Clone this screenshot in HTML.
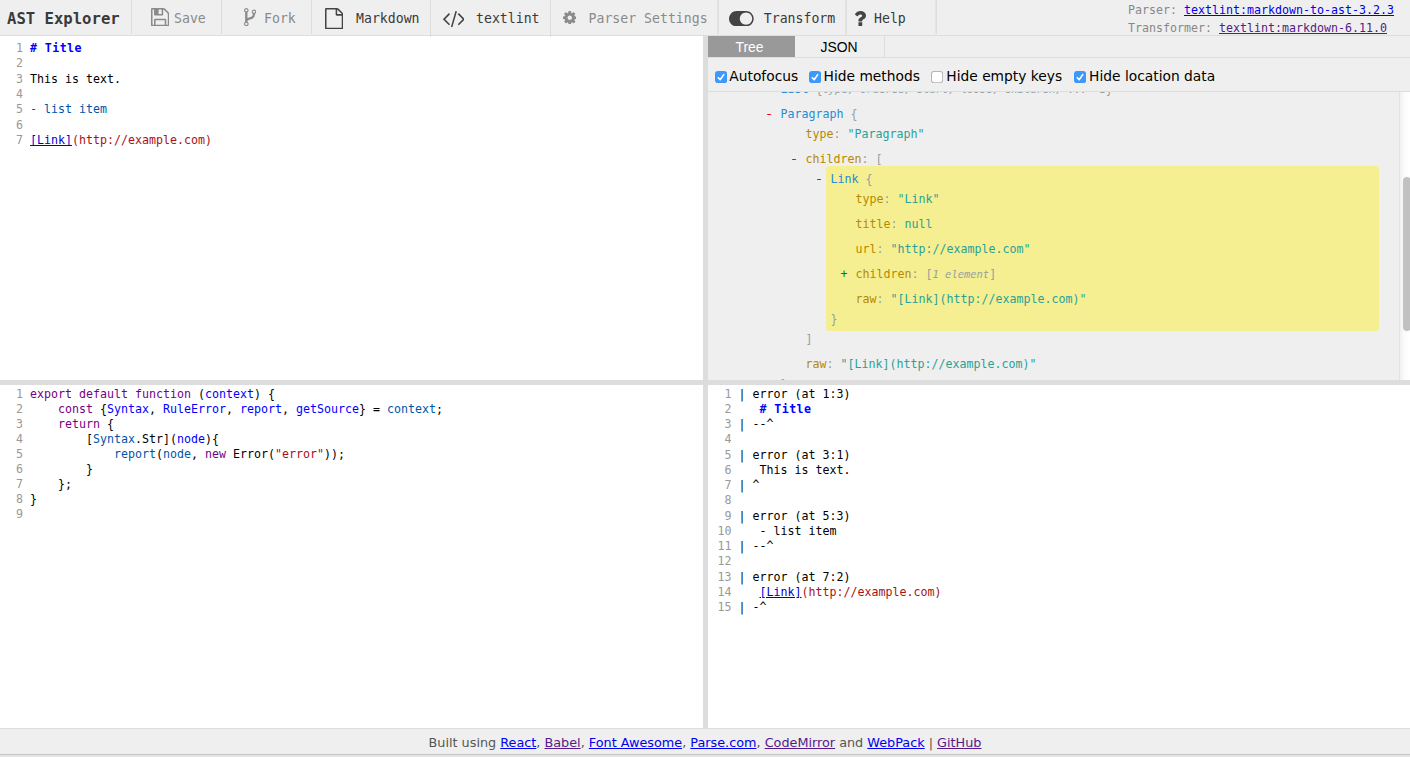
<!DOCTYPE html>
<html><head><meta charset="utf-8"><title>AST Explorer</title>
<style>
*{box-sizing:border-box}
html,body{margin:0;padding:0;width:1410px;height:757px;overflow:hidden;background:#fff}
body{position:relative;font-family:"DejaVu Sans Mono","Liberation Mono",monospace;font-size:11.63px;color:#000}
a{text-decoration:underline}
.abs{position:absolute}
#toolbar{left:0;top:0;width:1410px;height:36px;background:#efefef;border-bottom:1px solid #ddd}
.sep{position:absolute;top:0;width:1px;height:34px;background:#ddd;z-index:5}
.tb{position:absolute;top:0;height:35px;line-height:37px;font-size:13.2px;color:#3a3a3a;white-space:pre}
.tb.dis{color:#8a8a8a}
#title{left:7px;top:0;height:35px;line-height:38.4px;font-size:15.6px;font-weight:bold;color:#3a3a3a;white-space:pre}
.pinfo{position:absolute;left:1128px;height:18px;line-height:18px;white-space:pre;color:#888}
.pinfo a{color:#0000ee}.pinfo a.v{color:#551a8b}
.cm{position:absolute;background:#fff;overflow:hidden}
.ln{position:absolute;white-space:pre}
.num{position:absolute;color:#999;text-align:right;white-space:pre;width:30px}
.kw{color:#708}.def{color:#00f}.v2{color:#05a}.str{color:#a11}
.hd{color:#00f;font-weight:bold;letter-spacing:0.42px}.lk{color:#00c;text-decoration:underline}
#vsplit{left:703px;top:36px;width:5px;height:692px;background:#ddd}
#hsplit{left:0;top:380px;width:1410px;height:5px;background:#ddd}
#footer{left:0;top:728px;width:1410px;height:29px;background:#efefef;border-top:1px solid #ddd;text-align:center;font-family:"DejaVu Sans","Liberation Sans",sans-serif;font-size:12.8px;color:#555;line-height:27px;white-space:pre}
#footer a{color:#0000ee}#footer a.v{color:#551a8b}
#tree{left:708px;top:36px;width:702px;height:344px;background:#efefef;overflow:hidden}
.tab{position:absolute;top:0;height:21px;line-height:23px;text-align:center;font-family:"Liberation Sans",sans-serif;font-size:13.9px;color:#000}
.tab.on{background:#999;color:#fff}
.lbl{position:absolute;top:30px;height:20px;line-height:20px;font-family:"DejaVu Sans","Liberation Sans",sans-serif;font-size:13.8px;color:#000;white-space:pre}
.tl{position:absolute;height:20px;line-height:20px;white-space:pre}
.hl{position:absolute;background:rgba(255,240,6,0.4);border-radius:3px}
.k{color:#b58900}.nm{color:#268bd2}.s{color:#2aa198}.p{color:#93a1a1}.mi{color:red;display:inline-block;transform:translateX(-1.3px) scaleX(1.25)}.pl{color:green;display:inline-block;transform:translateX(-1px)}.it{color:#93a1a1;font-style:italic;font-size:0.9em}
</style></head><body>
<div id="toolbar" class="abs">
<div id="title" class="abs">AST Explorer</div>
<div class="sep" style="left:131px;height:34px"></div>
<div class="sep" style="left:221px;height:34px"></div>
<div class="sep" style="left:311px;height:34px"></div>
<div class="sep" style="left:430px;height:37px"></div>
<div class="sep" style="left:550px;height:37px"></div>
<div class="sep" style="left:717px;height:34px;opacity:0.80"></div><div class="sep" style="left:718px;height:34px;opacity:0.80"></div>
<div class="sep" style="left:845px;height:36px;opacity:0.80"></div><div class="sep" style="left:846px;height:36px;opacity:0.80"></div>
<div class="sep" style="left:935px;height:34px;opacity:0.60"></div><div class="sep" style="left:936px;height:34px;opacity:1.00"></div>
<svg class="abs" style="left:150.5px;top:8.0px" width="18.30" height="18.30" viewBox="128 128 1536 1536" preserveAspectRatio="none"><path fill="#8a8a8a" d="M512 1536h768v-384h-768v384zm896 0h128v-896q0-14-10-38.500t-20-34.500l-281-281q-10-10-34-20t-39-10v416q0 40-28 68t-68 28h-576q-40 0-68-28t-28-68v-416h-128v1280h128v-416q0-40 28-68t68-28h832q40 0 68 28t28 68v416zm-384-928v-320q0-13-9.500-22.500t-22.500-9.500h-192q-13 0-22.500 9.500t-9.500 22.500v320q0 13 9.500 22.500t22.500 9.500h192q13 0 22.500-9.500t9.500-22.500zm640 32v928q0 40-28 68t-68 28h-1344q-40 0-68-28t-28-68v-1344q0-40 28-68t68-28h928q40 0 88 20t76 48l280 280q28 28 48 76t20 88z"/></svg>
<div class="tb dis" style="left:174px">Save</div>
<svg class="abs" style="left:243.5px;top:8.2px" width="12.30" height="18.20" viewBox="384 128 1024 1536" preserveAspectRatio="none"><path fill="#8a8a8a" d="M672 1472q0-40-28-68t-68-28-68 28-28 68 28 68 68 28 68-28 28-68zm0-1152q0-40-28-68t-68-28-68 28-28 68 28 68 68 28 68-28 28-68zm640 128q0-40-28-68t-68-28-68 28-28 68 28 68 68 28 68-28 28-68zm96 0q0 52-26 96.500t-70 69.500q-2 287-226 414-67 38-203 81-128 40-169.500 71t-41.500 100v26q44 25 70 69.500t26 96.500q0 80-56 136t-136 56-136-56-56-136q0-52 26-96.500t70-69.500v-820q-44-25-70-69.500t-26-96.500q0-80 56-136t136-56 136 56 56 136q0 52-26 96.500t-70 69.500v497q54-26 154-57 55-17 87.500-29.500t70.500-31 59-39.500 40.500-51 28-69.500 8.500-91.500q-44-25-70-69.500t-26-96.500q0-80 56-136t136-56 136 56 56 136z"/></svg>
<div class="tb dis" style="left:264px">Fork</div>
<svg class="abs" style="left:325px;top:7.6px" width="18.25" height="21.40" viewBox="128 0 1536 1792" preserveAspectRatio="none"><path fill="#444" d="M1596 380q28 28 48 76t20 88v1152q0 40-28 68t-68 28h-1344q-40 0-68-28t-28-68v-1600q0-40 28-68t68-28h896q40 0 88 20t76 48zm-444-244v376h376q-10-29-22-41l-313-313q-12-12-41-22zm384 1528v-1024h-416q-40 0-68-28t-28-68v-416h-768v1536h1280z"/></svg>
<div class="tb" style="left:356px">Markdown</div>
<svg class="abs" style="left:442.6px;top:10.6px" width="21.80" height="16.40" viewBox="-19 273.5 1830 1373" preserveAspectRatio="none"><path fill="#444" d="M553 1399l-50 50q-10 10-23 10t-23-10l-466-466q-10-10-10-23t10-23l466-466q10-10 23-10t23 10l50 50q10 10 10 23t-10 23l-393 393 393 393q10 10 10 23t-10 23zm591-1067l-373 1291q-4 13-15.500 19.500t-23.500 2.500l-62-17q-13-4-19.500-15.500t-2.500-24.500l373-1291q4-13 15.500-19.500t23.500-2.500l62 17q13 4 19.500 15.500t2.500 24.500zm657 651l-466 466q-10 10-23 10t-23-10l-50-50q-10-10-10-23t10-23l393-393-393-393q-10-10-10-23t10-23l50-50q10-10 23-10t23 10l466 466q10 10 10 23t-10 23z"/></svg>
<div class="tb" style="left:476px">textlint</div>
<svg class="abs" style="left:562.5px;top:10.6px" width="13.50" height="13.50" viewBox="128 128 1536 1536" preserveAspectRatio="none"><path fill="#8a8a8a" d="M1152 896q0-106-75-181t-181-75-181 75-75 181 75 181 181 75 181-75 75-181zm512-109v222q0 12-8 23t-20 13l-185 28q-19 54-39 91 35 50 107 138 10 12 10 25t-9 23q-27 37-99 108t-94 71q-12 0-26-9l-138-108q-44 23-91 38-16 136-29 186-7 28-36 28h-222q-14 0-24.500-8.500t-11.500-21.500l-28-184q-49-16-90-37l-141 107q-10 9-25 9-14 0-25-11-126-114-165-168-7-10-7-23 0-12 8-23 15-21 51-66.500t54-70.500q-27-50-41-99l-183-27q-13-2-21-12.500t-8-23.500v-222q0-12 8-23t19-13l186-28q14-46 39-92-40-57-107-138-10-12-10-24 0-10 9-23 26-36 98.500-107.500t94.500-71.500q13 0 26 10l138 107q44-23 91-38 16-136 29-186 7-28 36-28h222q14 0 24.500 8.500t11.500 21.500l28 184q49 16 90 37l142-107q9-9 24-9 13 0 25 10 129 119 165 170 7 8 7 22 0 12-8 23-15 21-51 66.500t-54 70.500q26 50 41 98l183 28q13 2 21 12.500t8 23.500z"/></svg>
<div class="tb dis" style="left:588.5px">Parser Settings</div>
<svg class="abs" style="left:729.3px;top:10.5px" width="24.70" height="15.40" viewBox="0 256 2048 1280" preserveAspectRatio="none"><path fill="#444" d="M0 896q0-130 51-248.500t136.500-204 204-136.500 248.500-51h768q130 0 248.500 51t204 136.500 136.500 204 51 248.500-51 248.500-136.500 204-204 136.500-248.500 51h-768q-130 0-248.500-51t-204-136.500-136.500-204-51-248.500zm1408 512q104 0 198.500-40.500t163.500-109.500 109.500-163.500 40.500-198.500-40.500-198.500-109.500-163.500-163.500-109.500-198.500-40.500-198.500 40.500-163.500 109.500-109.500 163.500-40.500 198.500 40.500 198.500 109.500 163.500 163.500 109.500 198.500 40.500z"/></svg>
<div class="tb" style="left:763.8px">Transform</div>
<svg class="abs" style="left:855px;top:11px" width="11.00" height="14.90" viewBox="480 256 924 1280" preserveAspectRatio="none"><path fill="#444" d="M1088 1256v240q0 16-12 28t-28 12h-240q-16 0-28-12t-12-28v-240q0-16 12-28t28-12h240q16 0 28 12t12 28zm316-600q0 54-15.500 101t-35 76.500-55 59.500-57.500 43.500-61 35.500q-41 23-68.500 65t-27.500 67q0 17-12 32.500t-28 15.500h-240q-15 0-25.500-18.500t-10.500-37.500v-45q0-83 65-156.500t143-108.500q59-27 84-56t25-76q0-42-46.500-74t-107.500-32q-65 0-108 29-35 25-107 115-13 16-31 16-12 0-25-8l-164-125q-13-10-15.500-25t5.500-28q160-266 464-266 80 0 161 31t146 83 106 127.500 41 158.500z"/></svg>
<div class="tb" style="left:874px">Help</div>
<div class="pinfo" style="top:1px"><span>Parser: </span><a href="#">textlint:markdown-to-ast-3.2.3</a></div>
<div class="pinfo" style="top:19px"><span>Transformer: </span><a class="v" href="#">textlint:markdown-6.11.0</a></div>
</div>
<div id="tl" class="cm" style="left:0;top:36px;width:703px;height:344px">
<div class="num" style="top:4.60px;height:15.45px;line-height:15.45px;left:-6.9px">1</div><div class="ln" style="top:4.60px;height:15.45px;line-height:15.45px;left:30px"><span class="hd"># Title</span></div>
<div class="num" style="top:20.05px;height:15.45px;line-height:15.45px;left:-6.9px">2</div><div class="ln" style="top:20.05px;height:15.45px;line-height:15.45px;left:30px"></div>
<div class="num" style="top:35.50px;height:15.45px;line-height:15.45px;left:-6.9px">3</div><div class="ln" style="top:35.50px;height:15.45px;line-height:15.45px;left:30px">This is text.</div>
<div class="num" style="top:50.95px;height:15.45px;line-height:15.45px;left:-6.9px">4</div><div class="ln" style="top:50.95px;height:15.45px;line-height:15.45px;left:30px"></div>
<div class="num" style="top:66.40px;height:15.45px;line-height:15.45px;left:-6.9px">5</div><div class="ln" style="top:66.40px;height:15.45px;line-height:15.45px;left:30px"><span class="v2">- list item</span></div>
<div class="num" style="top:81.85px;height:15.45px;line-height:15.45px;left:-6.9px">6</div><div class="ln" style="top:81.85px;height:15.45px;line-height:15.45px;left:30px"></div>
<div class="num" style="top:97.30px;height:15.45px;line-height:15.45px;left:-6.9px">7</div><div class="ln" style="top:97.30px;height:15.45px;line-height:15.45px;left:30px"><span class="lk">[Link]</span><span class="str">(http://example.com)</span></div>
</div>
<div id="tree" class="abs">
<div class="tab on" style="left:0;width:87px;padding-right:4px">Tree</div><div class="tab" style="left:87px;width:90px;padding-right:1px;border-right:1px solid #ddd">JSON</div>
<div class="abs" style="left:0;top:21px;width:702px;height:1px;background:#ddd"></div>
<div class="abs" style="left:0;top:55px;width:702px;height:1px;background:#ddd"></div>
<svg class="abs" style="left:7.0px;top:34.9px" width="12.2" height="12.2" viewBox="0 0 12 12"><rect x="0" y="0" width="12" height="12" rx="2.9" fill="#3c99fb"/><path d="M3.2 6.6 L5.1 8.6 L8.6 3.6" fill="none" stroke="#fff" stroke-width="1.55" stroke-linecap="round" stroke-linejoin="round"/></svg>
<div class="lbl" style="left:21.3px">Autofocus</div>
<svg class="abs" style="left:101.0px;top:34.9px" width="12.2" height="12.2" viewBox="0 0 12 12"><rect x="0" y="0" width="12" height="12" rx="2.9" fill="#3c99fb"/><path d="M3.2 6.6 L5.1 8.6 L8.6 3.6" fill="none" stroke="#fff" stroke-width="1.55" stroke-linecap="round" stroke-linejoin="round"/></svg>
<div class="lbl" style="left:115.6px">Hide methods</div>
<svg class="abs" style="left:223.1px;top:34.9px" width="12.2" height="12.2" viewBox="0 0 12 12"><rect x="0.5" y="0.5" width="11" height="11" rx="2.3" fill="#fff" stroke="#b4b4b4" stroke-width="1"/></svg>
<div class="lbl" style="left:238.3px">Hide empty keys</div>
<svg class="abs" style="left:365.9px;top:34.9px" width="12.2" height="12.2" viewBox="0 0 12 12"><rect x="0" y="0" width="12" height="12" rx="2.9" fill="#3c99fb"/><path d="M3.2 6.6 L5.1 8.6 L8.6 3.6" fill="none" stroke="#fff" stroke-width="1.55" stroke-linecap="round" stroke-linejoin="round"/></svg>
<div class="lbl" style="left:381.1px">Hide location data</div>
<div id="treebody" class="abs" style="left:0;top:56px;width:702px;height:288px;overflow:hidden">
<div class="hl" style="left:118px;top:74px;width:553px;height:165px"></div>
<div class="tl" style="left:58.5px;top:-13.42px"><span class="pl">+</span> <span class="nm">List</span> <span class="p">{</span><span class="it">type, ordered, start, loose, children, ... +1</span><span class="p">}</span></div>
<div class="tl" style="left:58.5px;top:11.58px"><span class="mi">-</span> <span class="nm">Paragraph</span> <span class="p">{</span></div>
<div class="tl" style="left:97.5px;top:31.58px"><span class="k">type</span><span class="p">:</span> <span class="s">&quot;Paragraph&quot;</span></div>
<div class="tl" style="left:83.5px;top:56.58px"><span class="mi">-</span> <span class="k">children</span><span class="p">:</span> <span class="p">[</span></div>
<div class="tl" style="left:108.5px;top:76.58px"><span class="mi">-</span> <span class="nm">Link</span> <span class="p">{</span></div>
<div class="tl" style="left:147.5px;top:96.58px"><span class="k">type</span><span class="p">:</span> <span class="s">&quot;Link&quot;</span></div>
<div class="tl" style="left:147.5px;top:121.58px"><span class="k">title</span><span class="p">:</span> <span class="s">null</span></div>
<div class="tl" style="left:147.5px;top:146.58px"><span class="k">url</span><span class="p">:</span> <span class="s">&quot;http://example.com&quot;</span></div>
<div class="tl" style="left:133.5px;top:171.58px"><span class="pl">+</span> <span class="k">children</span><span class="p">:</span> <span class="p">[</span><span class="it">1 element</span><span class="p">]</span></div>
<div class="tl" style="left:147.5px;top:196.58px"><span class="k">raw</span><span class="p">:</span> <span class="s">&quot;[Link](http://example.com)&quot;</span></div>
<div class="tl" style="left:122.5px;top:216.58px"><span class="p">}</span></div>
<div class="tl" style="left:97.5px;top:236.58px"><span class="p">]</span></div>
<div class="tl" style="left:97.5px;top:261.58px"><span class="k">raw</span><span class="p">:</span> <span class="s">&quot;[Link](http://example.com)&quot;</span></div>
<div class="tl" style="left:72.5px;top:281.58px"><span class="p">}</span></div>
<div class="abs" style="left:691px;top:0;width:11px;height:288px;background:linear-gradient(to right,#f0f0f0 0,#fafafa 4px,#fff 100%);border-left:1px solid #e3e3e3"></div>
<div class="abs" style="left:695px;top:85px;width:8px;height:154px;background:#c1c1c1;border-radius:4px"></div>
</div>
</div>
<div id="bl" class="cm" style="left:0;top:385px;width:703px;height:343px">
<div class="num" style="top:1.68px;height:15.0px;line-height:15.0px;left:-6.9px">1</div><div class="ln" style="top:1.68px;height:15.0px;line-height:15.0px;left:30px"><span class="kw">export</span> <span class="kw">default</span> <span class="kw">function</span> (<span class="def">context</span>) {</div>
<div class="num" style="top:16.68px;height:15.0px;line-height:15.0px;left:-6.9px">2</div><div class="ln" style="top:16.68px;height:15.0px;line-height:15.0px;left:30px">    <span class="kw">const</span> {<span class="def">Syntax</span>, <span class="def">RuleError</span>, <span class="def">report</span>, <span class="def">getSource</span>} = <span class="v2">context</span>;</div>
<div class="num" style="top:31.68px;height:15.0px;line-height:15.0px;left:-6.9px">3</div><div class="ln" style="top:31.68px;height:15.0px;line-height:15.0px;left:30px">    <span class="kw">return</span> {</div>
<div class="num" style="top:46.68px;height:15.0px;line-height:15.0px;left:-6.9px">4</div><div class="ln" style="top:46.68px;height:15.0px;line-height:15.0px;left:30px">        [<span class="v2">Syntax</span>.Str](<span class="def">node</span>){</div>
<div class="num" style="top:61.68px;height:15.0px;line-height:15.0px;left:-6.9px">5</div><div class="ln" style="top:61.68px;height:15.0px;line-height:15.0px;left:30px">            <span class="v2">report</span>(<span class="v2">node</span>, <span class="kw">new</span> Error(<span class="str">&quot;error&quot;</span>));</div>
<div class="num" style="top:76.68px;height:15.0px;line-height:15.0px;left:-6.9px">6</div><div class="ln" style="top:76.68px;height:15.0px;line-height:15.0px;left:30px">        }</div>
<div class="num" style="top:91.68px;height:15.0px;line-height:15.0px;left:-6.9px">7</div><div class="ln" style="top:91.68px;height:15.0px;line-height:15.0px;left:30px">    };</div>
<div class="num" style="top:106.68px;height:15.0px;line-height:15.0px;left:-6.9px">8</div><div class="ln" style="top:106.68px;height:15.0px;line-height:15.0px;left:30px">}</div>
<div class="num" style="top:121.68px;height:15.0px;line-height:15.0px;left:-6.9px">9</div><div class="ln" style="top:121.68px;height:15.0px;line-height:15.0px;left:30px"></div>
</div>
<div id="br" class="cm" style="left:708px;top:385px;width:702px;height:343px">
<div class="num" style="top:1.65px;height:15.25px;line-height:15.25px;left:-6.6px">1</div><div class="ln" style="top:1.65px;height:15.25px;line-height:15.25px;left:30.5px">| error (at 1:3)</div>
<div class="num" style="top:16.90px;height:15.25px;line-height:15.25px;left:-6.6px">2</div><div class="ln" style="top:16.90px;height:15.25px;line-height:15.25px;left:30.5px">   <span class="hd"># Title</span></div>
<div class="num" style="top:32.15px;height:15.25px;line-height:15.25px;left:-6.6px">3</div><div class="ln" style="top:32.15px;height:15.25px;line-height:15.25px;left:30.5px">| --^</div>
<div class="num" style="top:47.40px;height:15.25px;line-height:15.25px;left:-6.6px">4</div><div class="ln" style="top:47.40px;height:15.25px;line-height:15.25px;left:30.5px"></div>
<div class="num" style="top:62.65px;height:15.25px;line-height:15.25px;left:-6.6px">5</div><div class="ln" style="top:62.65px;height:15.25px;line-height:15.25px;left:30.5px">| error (at 3:1)</div>
<div class="num" style="top:77.90px;height:15.25px;line-height:15.25px;left:-6.6px">6</div><div class="ln" style="top:77.90px;height:15.25px;line-height:15.25px;left:30.5px">   This is text.</div>
<div class="num" style="top:93.15px;height:15.25px;line-height:15.25px;left:-6.6px">7</div><div class="ln" style="top:93.15px;height:15.25px;line-height:15.25px;left:30.5px">| ^</div>
<div class="num" style="top:108.40px;height:15.25px;line-height:15.25px;left:-6.6px">8</div><div class="ln" style="top:108.40px;height:15.25px;line-height:15.25px;left:30.5px"></div>
<div class="num" style="top:123.65px;height:15.25px;line-height:15.25px;left:-6.6px">9</div><div class="ln" style="top:123.65px;height:15.25px;line-height:15.25px;left:30.5px">| error (at 5:3)</div>
<div class="num" style="top:138.90px;height:15.25px;line-height:15.25px;left:-6.6px">10</div><div class="ln" style="top:138.90px;height:15.25px;line-height:15.25px;left:30.5px">   - list item</div>
<div class="num" style="top:154.15px;height:15.25px;line-height:15.25px;left:-6.6px">11</div><div class="ln" style="top:154.15px;height:15.25px;line-height:15.25px;left:30.5px">| --^</div>
<div class="num" style="top:169.40px;height:15.25px;line-height:15.25px;left:-6.6px">12</div><div class="ln" style="top:169.40px;height:15.25px;line-height:15.25px;left:30.5px"></div>
<div class="num" style="top:184.65px;height:15.25px;line-height:15.25px;left:-6.6px">13</div><div class="ln" style="top:184.65px;height:15.25px;line-height:15.25px;left:30.5px">| error (at 7:2)</div>
<div class="num" style="top:199.90px;height:15.25px;line-height:15.25px;left:-6.6px">14</div><div class="ln" style="top:199.90px;height:15.25px;line-height:15.25px;left:30.5px">   <span class="lk">[Link]</span><span class="str">(http://example.com)</span></div>
<div class="num" style="top:215.15px;height:15.25px;line-height:15.25px;left:-6.6px">15</div><div class="ln" style="top:215.15px;height:15.25px;line-height:15.25px;left:30.5px">| -^</div>
</div>
<div id="vsplit" class="abs"></div>
<div id="hsplit" class="abs"></div>
<div id="footer" class="abs">Built using <a href="#">React</a>, <a class="v" href="#">Babel</a>, <a href="#">Font Awesome</a>, <a href="#">Parse.com</a>, <a class="v" href="#">CodeMirror</a> and <a href="#">WebPack</a> | <a class="v" href="#">GitHub</a></div>
<div class="abs" style="left:0;top:754px;width:1410px;height:1px;background:#c4c4c4"></div>
<div class="abs" style="left:0;top:755px;width:1410px;height:2px;background:#e4e4e4"></div>
</body></html>
